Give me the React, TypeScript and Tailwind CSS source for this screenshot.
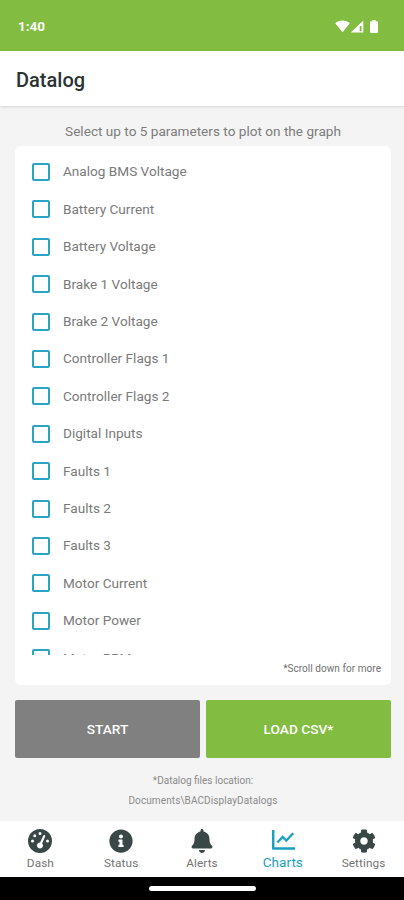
import type { ReactNode } from 'react';
import { FaCog, FaInfoCircle } from 'react-icons/fa';
import { FaBell, FaGaugeHigh } from 'react-icons/fa6';

const parameters = [
  'Analog BMS Voltage',
  'Battery Current',
  'Battery Voltage',
  'Brake 1 Voltage',
  'Brake 2 Voltage',
  'Controller Flags 1',
  'Controller Flags 2',
  'Digital Inputs',
  'Faults 1',
  'Faults 2',
  'Faults 3',
  'Motor Current',
  'Motor Power',
  'Motor RPM',
];

function StatusBar() {
  return (
    <div className="flex h-[51px] shrink-0 items-center justify-between bg-[#82bd41] pl-[18px] pr-[26px] pt-[2px] text-white">
      <span className="text-[13.5px] font-bold leading-none">1:40</span>
      <div className="flex items-center">
        <svg width="15" height="13" viewBox="0 0 15 13" fill="currentColor">
          <path d="M.2 3.200C4.200-.5 10.800-.5 14.800 3.200L7.500 12.200Z" />
        </svg>
        <svg width="14" height="13" viewBox="0 0 14 13">
          <path d="M13.300.5V12.500H.8Z" fill="currentColor" />
          <path d="M9.700 6H11.500V11.300H9.700Z" fill="#82bd41" />
        </svg>
        <svg className="ml-[6px]" width="8" height="13" viewBox="0 0 8 13" fill="currentColor">
          <path d="M2.300 0H5.700V1.200H7Q8 1.200 8 2.200V12Q8 13 7 13H1Q0 13 0 12V2.200Q0 1.200 1 1.200H2.300Z" />
        </svg>
      </div>
    </div>
  );
}

function ParameterRow({ label }: { label: string }) {
  return (
    <label className="flex h-[37.42px] shrink-0 items-center">
      <span className="h-[18px] w-[18px] shrink-0 rounded-[2px] border-2 border-[#27a5c3]" />
      <span className="ml-[13px] whitespace-nowrap pb-px text-[13.6px] text-[#7a7a7a]">{label}</span>
    </label>
  );
}

function ChartIcon() {
  return (
    <svg width="24" height="24" viewBox="0 0 24 24" fill="none" stroke="currentColor">
      <path d="M2.200 1V19.600H24" strokeWidth="2.500" strokeLinejoin="round" />
      <path d="M6.300 13.500L11.700 8L15.300 11.600L22.200 4.300" strokeWidth="2.300" />
    </svg>
  );
}

function Tab({ icon, label, active }: { icon: ReactNode; label: string; active?: boolean }) {
  return (
    <button className={`flex flex-1 flex-col items-center pt-[8px] ${active ? 'text-[#1b9fbf]' : 'text-[#3a4747]'}`}>
      <span className="flex h-6 items-center">{icon}</span>
      <span
        className={
          active
            ? 'mt-[1px] text-[13.6px] leading-[16px]'
            : 'mt-[2px] text-[11.8px] leading-[16px] tracking-[0.1px] text-[#747474]'
        }
      >
        {label}
      </span>
    </button>
  );
}

export default function App() {
  return (
    <div className="flex h-[900px] w-[404px] flex-col overflow-hidden bg-[#f4f4f4] font-[Roboto,sans-serif]">
      <StatusBar />

      {/* Title */}
      <header className="z-10 flex h-[55px] shrink-0 items-center bg-white px-4 pt-[2px] shadow-[0_1px_3px_rgba(0,0,0,0.13)]">
        <h1 className="text-[20px] font-medium leading-none text-[#2c3333]">Datalog</h1>
      </header>

      <main className="flex flex-1 flex-col px-[15px] pt-[15px]">
        <p className="w-[376px] text-center text-[13.6px] leading-5 text-[#7c7c7c]">
          Select up to 5 parameters to plot on the graph
        </p>

        {/* Parameter list */}
        <section className="mt-[5px] flex h-[539px] w-[376px] shrink-0 flex-col rounded-[6px] bg-white">
          <div className="flex h-[509px] flex-col overflow-hidden pl-[17px] pt-[7.300px]">
            {parameters.map((name) => (
              <ParameterRow key={name} label={name} />
            ))}
          </div>
          <p className="pr-[10px] pt-[6px] text-right text-[10px] leading-4 tracking-[0.05px] text-[#707070]">
            *Scroll down for more
          </p>
        </section>

        {/* Actions */}
        <div className="mt-[15px] flex h-[58px] w-[376px] shrink-0 gap-[6px] text-[13.7px] font-medium text-white">
          <button className="flex-1 rounded-[2px] bg-[#808080] pt-px">START</button>
          <button className="flex-1 rounded-[2px] bg-[#82bd41] pt-px">LOAD CSV*</button>
        </div>

        <div className="mt-[13px] w-[376px] text-center text-[10px] leading-5 text-[#8a8a8a]">
          <p>*Datalog files location:</p>
          <p className="tracking-[0.1px]">Documents\BACDisplayDatalogs</p>
        </div>
      </main>

      <nav className="flex h-[56px] shrink-0 bg-white">
        <Tab icon={<FaGaugeHigh size={24} />} label="Dash" />
        <Tab icon={<FaInfoCircle size={24} />} label="Status" />
        <Tab icon={<FaBell size={24} />} label="Alerts" />
        <Tab icon={<ChartIcon />} label="Charts" active />
        <Tab icon={<FaCog size={24} />} label="Settings" />
      </nav>

      {/* Gesture bar */}
      <div className="flex h-[23px] shrink-0 justify-center bg-black pt-[9px]">
        <div className="h-[5px] w-[107px] rounded-full bg-white" />
      </div>
    </div>
  );
}
